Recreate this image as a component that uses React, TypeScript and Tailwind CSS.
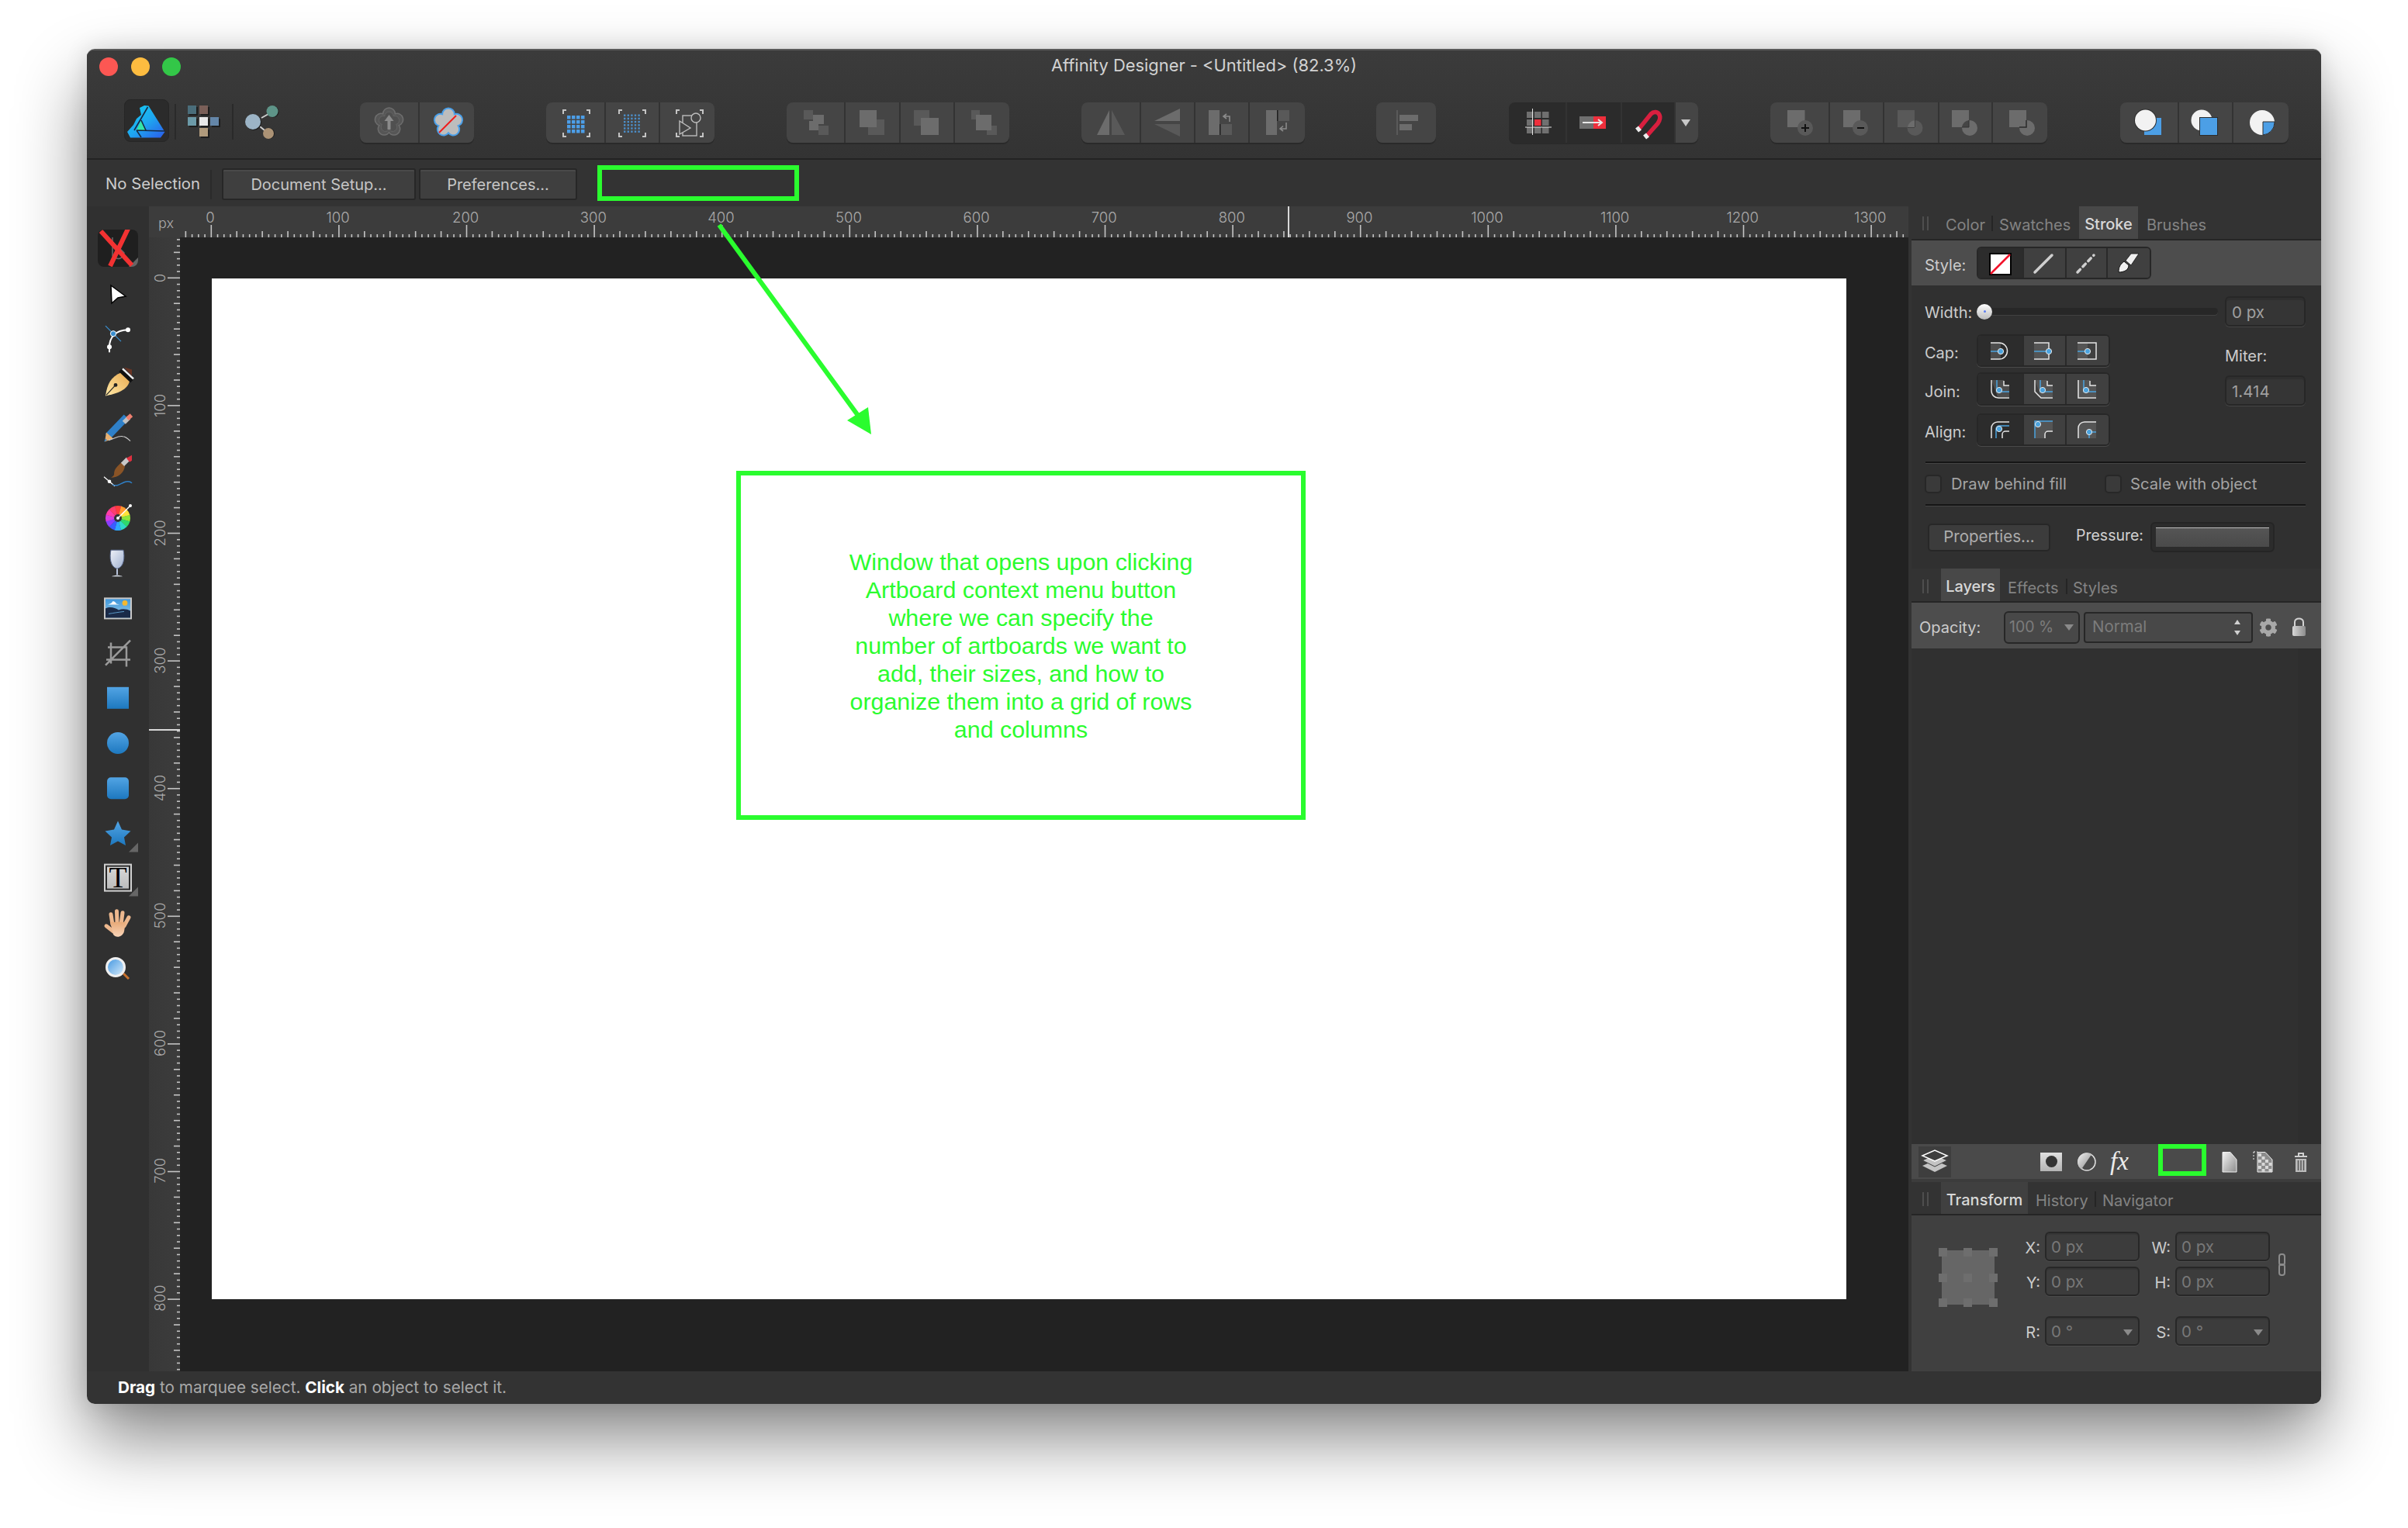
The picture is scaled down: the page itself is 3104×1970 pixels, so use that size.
import React from 'react';
import { FaCog } from 'react-icons/fa';

const GREEN = '#2afc2e';

// svg whose viewBox is in screenshot pixels, so shapes can be placed by page coordinates
const Pic: React.FC<{ x: number; y: number; w: number; h: number; className?: string; children?: React.ReactNode }> = ({ x, y, w, h, className, children }) => (
  <svg width={w} height={h} viewBox={`${x} ${y} ${w} ${h}`} className={`block shrink-0 ${className ?? ''}`} fill="none">
    {children}
  </svg>
);

const flower = (cx: number, cy: number, R: number) => {
  const rad = (d: number) => (d * Math.PI) / 180;
  const vr = R * 0.74;
  const r = R * 0.42;
  const pts = [0, 1, 2, 3, 4, 5].map((i) => {
    const a = rad(-90 - 36 + 72 * i);
    return [cx + vr * Math.cos(a), cy + vr * Math.sin(a)];
  });
  let d = `M${pts[0][0]} ${pts[0][1]}`;
  for (let i = 1; i < 6; i++) d += ` A${r} ${r} 0 1 1 ${pts[i][0]} ${pts[i][1]}`;
  return d + 'Z';
};

const ToolGroup: React.FC<{ className?: string; children: React.ReactNode }> = ({ className, children }) => (
  <div className={`mt-1 flex h-[52px] overflow-hidden rounded-lg shadow-[0_2px_0_#2a2a2a] [&>*+*]:shadow-[inset_2px_0_0_#333] ${className ?? 'bg-[#454545]'}`}>
    {children}
  </div>
);

const Cell: React.FC<{ x: number; w: number; className?: string; children?: React.ReactNode }> = ({ x, w, className, children }) => (
  <div className={className} style={{ width: w }}>
    <Pic x={x} y={132} w={w} h={52}>{children}</Pic>
  </div>
);

const C1 = '#6c6c6c';
const C2 = '#595959';

const Brackets = ({ x }: { x: number }) => (
  <g stroke="#c4c4c4" strokeWidth="2">
    <path d={`M${x} 147V142H${x + 4}M${x + 30} 142H${x + 34}V147M${x} 171V176H${x + 4}M${x + 30} 176H${x + 34}V171`} />
  </g>
);

const Toolbar = () => (
  <div className="flex h-[97px] items-start border-b-2 border-[#232323] pl-[48px] pt-[19px]">
    <div className="h-[55px] w-[58px] rounded-lg border border-[#262626] bg-[#2b2b2b]">
      <Pic x={161} y={129} w={56} h={53}>
        <defs>
          <linearGradient id="aff" x1="0" y1="0" x2="0.9" y2="1">
            <stop offset="0" stopColor="#14d0f2" />
            <stop offset="0.55" stopColor="#1ea6f0" />
            <stop offset="1" stopColor="#2a62ea" />
          </linearGradient>
        </defs>
        <path d="M191.5 136.5L212.5 170L207 177.5L168 177.5L164 170L172 161L176 153L182 148L180 139L186 136Z" fill="url(#aff)" />
        <path d="M176 168L182 155L188 168Z" fill="#34e6a8" />
        <path d="M190.5 138L173 168M182 155L188 168M176 168L213 169M176 168L182 177" stroke="#182a42" strokeWidth="1.6" />
      </Pic>
    </div>
    <div className="ml-[7px] mt-[6px] h-[46px] w-[2px] bg-[#2a2a2a]" />
    <Pic x={227} y={132} w={72} h={52} className="mt-1">
      {[[242, 136, '#4a6d7a'], [257, 136, '#7a5f58'], [242, 151, '#6c9aa8'], [257, 151, '#e8e8e8'], [271, 151, '#6486a8'], [257, 165, '#b09a7c']].map(([x, y, c]) => (
        <g key={`${x}-${y}`}>
          <rect x={(x as number) + 2} y={(y as number) + 2} width="11" height="11" fill="#1d1d1d" />
          <rect x={x as number} y={y as number} width="11" height="11" fill={c as string} />
        </g>
      ))}
    </Pic>
    <div className="mt-[6px] h-[46px] w-[2px] bg-[#2a2a2a]" />
    <Pic x={301} y={132} w={62} h={52} className="mt-1">
      <path d="M337 152L346 147M335 163L341 168" stroke="#d0d0d0" strokeWidth="2" />
      <circle cx="327" cy="158" r="10" fill="#1d1d1d" />
      <circle cx="326" cy="157" r="10" fill="#9cb4c6" />
      <circle cx="352" cy="144" r="7.5" fill="#1d1d1d" />
      <circle cx="351" cy="143.5" r="7.5" fill="#5e9488" />
      <circle cx="347" cy="172" r="7" fill="#1d1d1d" />
      <circle cx="346" cy="172" r="7" fill="#ab9275" />
    </Pic>

    <div className="ml-[101px]">
      <ToolGroup>
        <Cell x={464} w={75}>
          <path d={flower(501.5, 157.5, 18)} fill="#565656" stroke="#6e6e6e" strokeWidth="1.5" />
          <path d={flower(501.5, 157.5, 13)} fill="#505050" stroke="#656565" />
          <path d="M501.5 148L507.5 156H503.5V167H499.5V156H495.5Z" fill="#8a8a8a" />
        </Cell>
        <Cell x={539} w={72}>
          <path d={flower(578, 158, 18)} fill="#bdbdbd" stroke="#4aa0ea" strokeWidth="2" />
          <path d="M566 171L588 149" stroke="#f01c1c" strokeWidth="2" />
        </Cell>
      </ToolGroup>
    </div>

    <div className="ml-[93px]">
      <ToolGroup>
        <Cell x={704} w={75}>
          <Brackets x={726} />
          {[0, 1, 2, 3].map((r) => [0, 1, 2, 3].map((c) => <rect key={`${r}${c}`} x={731 + c * 6} y={149 + r * 6} width="4.5" height="4.5" fill="#4c9ee8" />))}
        </Cell>
        <Cell x={779} w={70}>
          <Brackets x={798} />
          {[0, 1, 2, 3, 4, 5].map((r) => [0, 1, 2, 3, 4].map((c) => <rect key={`${r}${c}`} x={804 + c * 4.6} y={147.5 + r * 4.2} width="2.4" height="2.4" fill="#4c8ec8" />))}
        </Cell>
        <Cell x={849} w={72}>
          <Brackets x={872} />
          <g stroke="#bdbdbd" strokeWidth="1.4">
            <rect x="880" y="149" width="18" height="26" />
            <circle cx="897" cy="152" r="6" fill="#454545" />
            <path d="M876 156L890 165L876 173Z" fill="#454545" />
          </g>
        </Cell>
      </ToolGroup>
    </div>

    <div className="ml-[93px]">
      <ToolGroup>
        <Cell x={1014} w={74}>
          <rect x="1036" y="142" width="12" height="12" fill={C2} />
          <rect x="1048" y="148" width="14" height="12" fill={C1} />
          <rect x="1043" y="156" width="12" height="12" fill={C1} />
          <rect x="1055" y="162" width="13" height="12" fill={C2} />
        </Cell>
        <Cell x={1088} w={71}>
          <path d="M1130 154H1140V174H1119V164H1130Z" fill={C2} />
          <rect x="1108" y="142" width="22" height="22" fill={C1} />
        </Cell>
        <Cell x={1159} w={70}>
          <rect x="1178" y="142" width="20" height="20" fill={C2} />
          <rect x="1187" y="152" width="23" height="22" fill={C1} />
        </Cell>
        <Cell x={1229} w={72}>
          <rect x="1252" y="142" width="11" height="6" fill={C2} />
          <rect x="1252" y="142" width="6" height="12" fill={C2} />
          <path d="M1278 162H1285V174H1272V168H1278Z" fill={C2} />
          <rect x="1258" y="148" width="20" height="20" fill={C1} />
        </Cell>
      </ToolGroup>
    </div>

    <div className="ml-[93px]">
      <ToolGroup>
        <Cell x={1394} w={75}>
          <path d="M1430 142V174H1414Z" fill={C1} />
          <path d="M1433 142V174H1450Z" fill={C2} />
        </Cell>
        <Cell x={1469} w={70}>
          <path d="M1521 140V156H1488Z" fill={C1} />
          <path d="M1521 176V160H1488Z" fill={C2} />
        </Cell>
        <Cell x={1539} w={70}>
          <rect x="1558" y="142" width="14" height="32" fill={C1} />
          <rect x="1573" y="160" width="15" height="14" fill={C2} />
          <rect x="1572" y="160" width="1.5" height="14" fill="#1f1f1f" />
          <path d="M1585 157V150H1578M1581 147L1577 150L1581 153" stroke="#8a8a8a" strokeWidth="1.6" />
        </Cell>
        <Cell x={1609} w={73}>
          <rect x="1632" y="142" width="14" height="32" fill={C1} />
          <rect x="1647" y="142" width="15" height="14" fill={C2} />
          <rect x="1646" y="142" width="1.5" height="14" fill="#1f1f1f" />
          <path d="M1658 158V166H1650M1654 162.5L1650 166L1654 169" stroke="#8a8a8a" strokeWidth="1.6" />
        </Cell>
      </ToolGroup>
    </div>

    <div className="ml-[92px]">
      <ToolGroup>
        <Cell x={1774} w={77}>
          <rect x="1800" y="142" width="2" height="32" fill={C2} />
          <rect x="1804" y="148" width="24" height="8" fill={C1} />
          <rect x="1804" y="160" width="16" height="8" fill={C1} />
        </Cell>
      </ToolGroup>
    </div>

    <div className="ml-[94px]">
      <ToolGroup className="bg-[#2b2b2b]">
        <Cell x={1945} w={73}>
          {[0, 1, 2].map((r) => [0, 1, 2].map((c) => (
            <rect key={`${r}${c}`} x={1968 + c * 10} y={144 + r * 10} width="8.5" height="8" fill={r === 1 && c === 1 ? '#ee2f3c' : '#707070'} />
          )))}
          <path d="M1975.5 140V174M1966 164H2000" stroke="#e4e4e4" strokeWidth="1" />
        </Cell>
        <Cell x={2018} w={71}>
          <rect x="2036" y="150" width="18" height="16" fill="#707070" />
          <rect x="2054" y="150" width="16" height="16" fill="#ee2f3c" />
          <path d="M2040 158H2064M2060 154L2065 158L2060 162" stroke="#e8e8e8" strokeWidth="2" />
        </Cell>
        <Cell x={2089} w={69}>
          <path d="M2112 167L2128 147C2132 143 2137 144 2139 148C2141 152 2139 156 2137 159L2122 176" stroke="#d81f3f" strokeWidth="5.5" />
          <path d="M2110 164L2114 169M2120 173L2124 178" stroke="#ececec" strokeWidth="5" />
        </Cell>
        <div className="flex w-[31px] items-start justify-center bg-[#454545]">
          <Pic x={2168} y={150} w={13} h={12} className="mt-5">
            <path d="M2168 152H2180L2174 161Z" fill="#c8c8c8" />
          </Pic>
        </div>
      </ToolGroup>
    </div>

    <div className="ml-[93px]">
      <ToolGroup>
        <Cell x={2282} w={75}>
          <rect x="2304" y="142" width="22.5" height="22" fill={C1} />
          <circle cx="2327" cy="165" r="10" fill={C2} />
          <path d="M2327 160V170M2322 165H2332" stroke="#111" strokeWidth="2" />
        </Cell>
        <Cell x={2357} w={70}>
          <rect x="2376" y="142" width="22" height="22" fill={C1} />
          <circle cx="2398" cy="165" r="10" fill={C2} />
          <path d="M2394 165H2403" stroke="#111" strokeWidth="2" />
        </Cell>
        <Cell x={2427} w={71}>
          <rect x="2446" y="142" width="22" height="22" fill={C2} />
          <circle cx="2468.5" cy="165" r="10" fill={C2} />
          <path d="M2468 155V164H2459" stroke="#2a2a2a" strokeWidth="1" />
          <path d="M2468 155A10 10 0 0 0 2459 164H2468Z" fill={C1} />
        </Cell>
        <Cell x={2498} w={69}>
          <rect x="2516" y="142" width="22" height="22" fill={C1} />
          <circle cx="2539" cy="165" r="10" fill={C1} />
          <path d="M2538 155A10 10 0 0 0 2529 164H2538Z" fill="#454545" />
          <path d="M2538 155V164H2529" stroke="#333" strokeWidth="1" />
        </Cell>
        <Cell x={2567} w={72}>
          <rect x="2590" y="142" width="22" height="22" fill={C1} />
          <circle cx="2613" cy="165" r="10" fill={C1} />
          <path d="M2612 155V164H2603" stroke="#2a2a2a" strokeWidth="1.5" />
        </Cell>
      </ToolGroup>
    </div>

    <div className="ml-[94px]">
      <ToolGroup>
        <Cell x={2733} w={74}>
          <rect x="2764" y="152" width="22" height="22" fill="#4c9fe6" />
          <circle cx="2765.5" cy="155" r="14.5" fill="#2c2c2c" />
          <circle cx="2765.5" cy="155" r="13.5" fill="#f2f2f2" />
        </Cell>
        <Cell x={2807} w={70}>
          <circle cx="2838" cy="155" r="13.5" fill="#f2f2f2" />
          <rect x="2835" y="151" width="24" height="24" fill="#2c2c2c" />
          <rect x="2836" y="152" width="22" height="22" fill="#4c9fe6" />
        </Cell>
        <Cell x={2877} w={73}>
          <circle cx="2916" cy="158" r="16" fill="#f2f2f2" />
          <path d="M2917 157H2932V158A16 16 0 0 1 2917 174Z" fill="#4c9fe6" stroke="#2c2c2c" strokeWidth="1" />
        </Cell>
      </ToolGroup>
    </div>
  </div>
);

const CtxButton: React.FC<{ className: string; children: React.ReactNode }> = ({ className, children }) => (
  <div className={`flex h-[41px] items-center justify-center rounded-[3px] border-2 border-[#272727] bg-[#3f3f3f] text-[20px] text-[#c6c6c6] shadow-[inset_0_2px_0_#4a4a4a] ${className}`}>
    {children}
  </div>
);

const ContextBar = () => (
  <div className="flex h-[60px] items-center pl-[24px] pt-[3px]">
    <span className="w-[135px] whitespace-nowrap text-[20.300px] text-[#cdcdcd]">No Selection</span>
    <div className="h-[38px] w-[2px] bg-[#2a2a2a]" />
    <CtxButton className="ml-[13px] w-[250px]">Document Setup...</CtxButton>
    <CtxButton className="ml-[4px] w-[204px]">Preferences...</CtxButton>
  </div>
);

const makeTicks = (zero: number, from: number, to: number) => {
  const ticks: { pos: number; size: number }[] = [];
  for (let k = Math.ceil((from - zero) / 8.23); zero + k * 8.23 < to; k++) {
    const size = k % 20 === 0 ? 16 : k % 4 === 0 ? 8 : 4;
    ticks.push({ pos: zero + k * 8.23, size });
  }
  return ticks;
};

const TopRuler = () => (
  <Pic x={232} y={266} w={2228} h={40}>
    {makeTicks(272.5, 236, 2460).map((t) => (
      <rect key={t.pos} x={t.pos - 1} y={306 - t.size} width="1.6" height={t.size} fill="#c4c4c4" />
    ))}
    {Array.from({ length: 14 }).map((_, i) => (
      <text key={i} x={271 + i * 164.6} y={286.5} textAnchor="middle" fontSize="18.5" fontWeight="300" fill="#aaaaaa">{i * 100}</text>
    ))}
    <rect x="1660" y="266" width="2" height="40" fill="#d8d8d8" />
  </Pic>
);

const LeftRuler = () => (
  <Pic x={192} y={306} w={40} h={1462}>
    {makeTicks(358.5, 308, 1768).map((t) => (
      <rect key={t.pos} x={232 - t.size} y={t.pos - 1} width={t.size} height="1.6" fill="#c4c4c4" />
    ))}
    {Array.from({ length: 9 }).map((_, i) => (
      <text key={i} transform={`translate(212.5 ${358.5 + i * 164.4}) rotate(-90)`} textAnchor="middle" fontSize="18.5" fontWeight="300" fill="#aaaaaa">{i * 100}</text>
    ))}
    <rect x="192" y="940" width="40" height="2" fill="#d8d8d8" />
  </Pic>
);

const Blue = ({ id }: { id: string }) => (
  <defs>
    <linearGradient id={id} x1="0" y1="0" x2="0" y2="1">
      <stop offset="0" stopColor="#52a4e4" />
      <stop offset="1" stopColor="#1d78bf" />
    </linearGradient>
  </defs>
);

const wheelColors = ['#ff3d3d', '#ff9a2e', '#ffe23a', '#8fe63a', '#2fd96a', '#2fd9c4', '#2fa8ff', '#3a5cff', '#8a3dff', '#d63de0', '#ff3da8', '#ff3d6d'];

const toolDrawings: React.ReactNode[] = [
  <path key="arrow" d="M143 368L162 382L152 384L144 391Z" fill="#fff" stroke="#000" strokeWidth="1.5" />,
  <g key="node">
    <path d="M136 420L156 440" stroke="#3a8fd0" strokeWidth="1.2" />
    <path d="M141 454V447C141 436 148 425 165 425" stroke="#fff" strokeWidth="2" />
    <circle cx="141" cy="447" r="3" fill="#fff" />
    <circle cx="165" cy="425" r="3" fill="#fff" />
    <circle cx="146" cy="430" r="3.6" fill="#3a8fd0" stroke="#fff" />
  </g>,
  <g key="pen">
    <defs>
      <linearGradient id="gold" x1="0" y1="1" x2="1" y2="0">
        <stop offset="0" stopColor="#ffe9a8" />
        <stop offset="1" stopColor="#e8a94e" />
      </linearGradient>
    </defs>
    <path d="M136 510C138 495 143 485 156 480L167 491C164 503 150 507 136 510Z" fill="url(#gold)" />
    <path d="M137 509L149 496" stroke="#222" strokeWidth="1.2" />
    <circle cx="149" cy="496" r="2.4" fill="#222" />
    <path d="M155 477L170 491" stroke="#111" strokeWidth="5" />
    <path d="M158 475L172 488" stroke="#eee" strokeWidth="2.5" />
    <path d="M160 473L170 476L170 484Z" fill="#6a3424" />
  </g>,
  <g key="pencil">
    <path d="M139 563L163 538" stroke="#2f80c8" strokeWidth="9" />
    <path d="M135 570L137 558L146 566Z" fill="#e8b070" />
    <path d="M134 570L136 566L138 568Z" fill="#2f80c8" />
    <path d="M161 540L165 544" stroke="#c0c0c0" strokeWidth="9" />
    <path d="M165 536L168.500 540" stroke="#f08070" strokeWidth="7" />
    <path d="M140 568C148 566 152 562 158 563C162 563 165 566 168 569" stroke="#ccc" strokeWidth="1.2" />
  </g>,
  <g key="brush">
    <path d="M147 612C147 604 152 601 157 596L161 601C160 610 152 616 143 616C146 614 147 613 147 612Z" fill="#8a5426" />
    <path d="M158 599L165 592" stroke="#c8c8c8" strokeWidth="6" />
    <path d="M163 591L170 587V594L167 596Z" fill="#e03040" />
    <path d="M134 615L148 627" stroke="#fff" strokeWidth="1.2" />
    <circle cx="141" cy="621" r="2.3" fill="#fff" />
    <path d="M145 625C151 628 155 624 160 622C165 620 168 621 170 623" stroke="#2f80c8" strokeWidth="1.5" />
  </g>,
  <g key="wheel">
    {wheelColors.map((c, i) => {
      const a = ((i * 30 - 105) * Math.PI) / 180;
      const b = (((i + 1) * 30 - 105 + 1) * Math.PI) / 180;
      return <path key={c} d={`M152 668L${152 + 16 * Math.cos(a)} ${668 + 16 * Math.sin(a)}A16 16 0 0 1 ${152 + 16 * Math.cos(b)} ${668 + 16 * Math.sin(b)}Z`} fill={c} />;
    })}
    <circle cx="152" cy="668" r="5" fill="#333" />
    <path d="M152 668L168 652" stroke="#fff" strokeWidth="1.5" />
    <circle cx="152" cy="668" r="2" fill="#fff" />
    <circle cx="168" cy="652" r="2" fill="#fff" />
  </g>,
  <g key="wine">
    <defs>
      <linearGradient id="glass" x1="0" y1="0" x2="1" y2="1">
        <stop offset="0" stopColor="#eef1f8" />
        <stop offset="1" stopColor="#9fb0d0" />
      </linearGradient>
    </defs>
    <path d="M143 709H159C161 718 160 731 151 733C142 731 141 718 143 709Z" fill="url(#glass)" stroke="#5a6a90" />
    <path d="M151 733V741" stroke="#b8c4dc" strokeWidth="2" />
    <path d="M144 743C147 741 155 741 158 743Z" fill="#dfe5f0" />
  </g>,
  <g key="image">
    <defs>
      <linearGradient id="sky" x1="0" y1="0" x2="0" y2="1">
        <stop offset="0" stopColor="#3a94dc" />
        <stop offset="1" stopColor="#9fd0e6" />
      </linearGradient>
    </defs>
    <rect x="135" y="771" width="34" height="26" fill="url(#sky)" stroke="#c8c8c8" strokeWidth="2" />
    <path d="M136 784C142 781 148 783 153 786C158 784 164 785 168 787V796H136Z" fill="#1a2a48" />
    <path d="M140 791C146 790 152 789 160 788" stroke="#5a9ac8" strokeWidth="1" />
    <circle cx="161" cy="777" r="3.400" fill="#f5b82e" />
    <path d="M139 779C141 778 144 778 145 775C147 774 149 776 150 778L154 779Z" fill="#fff" />
  </g>,
  <path key="crop" d="M143 829V856M137 851H168M139 835H163V860M136 858L168 826" stroke="#9a9a9a" strokeWidth="2.500" />,
  <g key="rect"><Blue id="b1" /><rect x="138" y="886" width="28" height="28" fill="url(#b1)" /></g>,
  <g key="ell"><Blue id="b2" /><circle cx="152" cy="958" r="14" fill="url(#b2)" /></g>,
  <g key="round"><Blue id="b3" /><rect x="138" y="1002" width="28" height="28" rx="5" fill="url(#b3)" /></g>,
  <g key="star">
    <Blue id="b4" />
    <path d="M152 1058L157 1069L168.500 1071L160 1079L162 1089.500L152 1084L142 1089.500L144 1079L135.500 1071L147 1069Z" fill="url(#b4)" />
    <path d="M178 1086V1098H166Z" fill="#666" />
  </g>,
  <g key="text">
    <defs>
      <linearGradient id="tbg" x1="0" y1="0" x2="0" y2="1">
        <stop offset="0" stopColor="#d8d8d8" />
        <stop offset="1" stopColor="#bcbcbc" />
      </linearGradient>
    </defs>
    <rect x="135" y="1115" width="34" height="34" fill="#2b2b2b" stroke="#d0d0d0" strokeWidth="2" />
    <rect x="138" y="1118" width="28" height="28" fill="url(#tbg)" />
    <text x="152" y="1144.500" textAnchor="middle" fontSize="38" fontFamily="'Liberation Serif', serif" fill="#000">T</text>
    <path d="M178 1144V1156H166Z" fill="#666" />
  </g>,
  <g key="hand">
    <defs>
      <linearGradient id="skin" x1="0" y1="0" x2="0" y2="1">
        <stop offset="0" stopColor="#e8aa78" />
        <stop offset="1" stopColor="#f8d4b8" />
      </linearGradient>
    </defs>
    <g stroke="#edb88e" strokeLinecap="round" strokeWidth="5">
      <path d="M145 1192L143 1179" />
      <path d="M151 1190L150.500 1175" />
      <path d="M156 1192L158 1177" />
      <path d="M160 1194L166 1183" />
      <path d="M146 1201L137 1194" />
    </g>
    <path d="M142 1189H162L160 1201C158 1209 149 1210 146 1205Z" fill="url(#skin)" />
  </g>,
  <g key="zoom">
    <defs>
      <linearGradient id="lens" x1="0" y1="0" x2="1" y2="1">
        <stop offset="0" stopColor="#3f94e0" />
        <stop offset="1" stopColor="#dcEffc" />
      </linearGradient>
    </defs>
    <path d="M159 1255L166 1262" stroke="#c8722e" strokeWidth="3" />
    <circle cx="149" cy="1247" r="11.500" fill="url(#lens)" stroke="#f0f0f0" strokeWidth="3" />
  </g>,
];

const ToolColumn = () => (
  <div className="flex w-[80px] shrink-0 flex-col bg-[#303030] pt-[30px]">
    <div className="relative ml-[14px] h-[48px] w-[52px] overflow-hidden rounded-lg bg-[#1f1f1f]">
      <Pic x={126} y={296} w={52} h={48}>
        <path d="M145 306V330C152 336 158 334 160 326L152 318" stroke="#6a6a6a" strokeWidth="1.500" />
        <path d="M178 332V344H166Z" fill="#666" />
        <path d="M130 298L170 342M165 295L142 343" stroke="#f23232" strokeWidth="6" />
      </Pic>
    </div>
    <div className="mt-[7px] flex flex-col">
      {toolDrawings.map((d, i) => (
        <div key={i} className="h-[57.8px]">
          <svg width="80" height="57.8" viewBox={`112 ${351 + i * 57.8} 80 57.8`} className="block overflow-visible" fill="none">{d}</svg>
        </div>
      ))}
    </div>
  </div>
);

const Grip = () => (
  <div className="flex h-[18px] w-[8px] justify-between">
    <span className="w-[2px] bg-[#4e4e4e]" />
    <span className="w-[2px] bg-[#4e4e4e]" />
  </div>
);

const TabSep = ({ className }: { className: string }) => <span className={`h-[20px] w-[2px] bg-[#252525] ${className}`} />;

const Tab: React.FC<{ className: string; children: React.ReactNode }> = ({ className, children }) => (
  <span className={`whitespace-nowrap pt-[4px] text-[20px] leading-none text-[#838383] ${className}`}>{children}</span>
);

const ActiveTab: React.FC<{ className: string; children: React.ReactNode }> = ({ className, children }) => (
  <div className={`flex h-full items-center justify-center self-end bg-[#484848] pt-[4px] text-[20px] font-medium text-[#d8d8d8] ${className}`}>{children}</div>
);

const Segments: React.FC<{ className?: string; children: React.ReactNode }> = ({ className, children }) => (
  <div className={`flex overflow-hidden rounded-[6px] border-2 border-[#272727] bg-[#404040] shadow-[0_1px_0_#4a4a4a] [&>*+*]:shadow-[inset_2px_0_0_#2a2a2a] ${className ?? 'h-[42px]'}`}>
    {children}
  </div>
);

const Seg: React.FC<{ x: number; w: number; y: number; h?: number; dark?: boolean; children?: React.ReactNode }> = ({ x, w, y, h = 38, dark, children }) => (
  <div className={dark ? 'bg-[#2c2c2c]' : 'bg-[#404040]'} style={{ width: w }}>
    <Pic x={x} y={y} w={w} h={h}>{children}</Pic>
  </div>
);

const Dot = ({ cx, cy }: { cx: number; cy: number }) => <circle cx={cx} cy={cy} r="3.600" fill="#4aa3df" stroke="#e8e8e8" />;

const BoxField: React.FC<{ className?: string; children?: React.ReactNode }> = ({ className, children }) => (
  <div className={`flex h-[39px] items-center rounded-[6px] border-2 border-[#272727] bg-[#353535] pl-[7px] pt-[3px] text-[20.500px] text-[#a0a0a0] shadow-[inset_0_3px_0_#2f2f2f,0_1px_0_#454545] ${className ?? ''}`}>
    {children}
  </div>
);

const Tri = () => (
  <svg width="12" height="10" viewBox="0 0 12 10" className="shrink-0"><path d="M0 1H12L6 9Z" fill="#8a8a8a" /></svg>
);

const TField: React.FC<{ label: string; labelW: string; value: string; drop?: boolean }> = ({ label, labelW, value, drop }) => (
  <div className="flex items-center">
    <span className={`mr-[6px] pt-[4px] text-right text-[20px] text-[#cccccc] ${labelW}`}>{label}</span>
    <div className="flex h-[38px] w-[122px] items-center justify-between rounded-[6px] border-2 border-[#272727] bg-[#3c3c3c] pl-[6px] pr-[7px] pt-[3px] text-[20.500px] text-[#787878] shadow-[inset_0_2px_0_#363636,0_1px_0_#4c4c4c]">
      {value}
      {drop && <Tri />}
    </div>
  </div>
);

const StrokePanel = () => (
  <>
    <div className="flex h-[44px] items-end border-b-2 border-[#252525] bg-[#333333] pl-[14px]">
      <div className="flex h-[40px] items-center">
        <Grip />
        <Tab className="ml-[22px] w-[51px]">Color</Tab>
        <TabSep className="ml-[8px]" />
        <Tab className="ml-[8px] w-[92px]">Swatches</Tab>
      </div>
      <ActiveTab className="ml-[11px] w-[76px]">Stroke</ActiveTab>
      <div className="flex h-[40px] items-center">
        <Tab className="ml-[11px]">Brushes</Tab>
      </div>
    </div>
    <div className="flex h-[58px] items-center bg-[#4d4d4d] pl-[17px]">
      <span className="w-[67px] pt-[6px] text-[20px] text-[#cccccc]">Style:</span>
      <Segments>
        <Seg x={2550} w={57} y={320} dark>
          <rect x="2565" y="327" width="27" height="27" fill="#fff" stroke="#000" strokeWidth="2" />
          <path d="M2566 353L2591 328" stroke="#f2122a" strokeWidth="2.500" />
        </Seg>
        <Seg x={2607} w={55} y={320}>
          <path d="M2623 351L2645 329" stroke="#cfcfcf" strokeWidth="3.500" strokeLinecap="round" />
        </Seg>
        <Seg x={2662} w={53} y={320}>
          <path d="M2678 351L2699 329" stroke="#cfcfcf" strokeWidth="3.500" strokeLinecap="round" strokeDasharray="5 5" />
        </Seg>
        <Seg x={2715} w={56} y={320}>
          <path d="M2731 351C2731 344 2733 341 2738 337L2744 342C2744 348 2738 351 2731 351Z" fill="#f0f0f0" stroke="#111" />
          <path d="M2740 336L2747 327H2757L2747 342Z" fill="#f0f0f0" stroke="#111" strokeWidth="0.800" />
        </Seg>
      </Segments>
    </div>

    <div className="h-[365px] bg-[#303030] pt-[14px]">
      <div className="ml-[17px] flex h-[39px] items-center">
        <span className="w-[67px] pt-[3px] text-[20px] text-[#cccccc]">Width:</span>
        <div className="relative h-[9px] w-[311px] rounded-full bg-[#272727] shadow-[0_1px_0_#414141]">
          <div className="absolute left-0 top-1/2 flex h-[20px] w-[20px] -translate-y-1/2 items-center justify-center rounded-full bg-gradient-to-b from-white to-[#bcbcbc]">
            <span className="h-[3px] w-[3px] rounded-full bg-[#5b7cf0]" />
          </div>
        </div>
        <BoxField className="ml-[9px] w-[104px]">0 px</BoxField>
      </div>

      <div className="ml-[17px] mt-[10px] flex">
        <div className="flex w-[387px] flex-col">
          <div className="flex h-[42px] items-center">
            <span className="w-[67px] pt-[6px] text-[20px] text-[#cccccc]">Cap:</span>
            <Segments>
              <Seg x={2550} w={57} y={433} dark>
                <rect x="2566" y="442" width="13" height="21" fill="#4d4d4d" />
                <path d="M2566 442H2577A10.500 10.500 0 0 1 2577 463H2566" stroke="#e4e4e4" strokeWidth="1.500" />
                <path d="M2566 453H2579" stroke="#4aa3df" strokeWidth="1.500" />
                <Dot cx={2579} cy={453} />
              </Seg>
              <Seg x={2607} w={55} y={433}>
                <rect x="2622" y="442" width="19" height="21" fill="#555" />
                <path d="M2622 442H2641V463H2622" stroke="#e4e4e4" strokeWidth="1.500" />
                <path d="M2622 453H2641" stroke="#4aa3df" strokeWidth="1.500" />
                <Dot cx={2641} cy={453} />
              </Seg>
              <Seg x={2662} w={56} y={433}>
                <rect x="2678" y="442" width="13" height="21" fill="#555" />
                <path d="M2678 442H2702V463H2678" stroke="#e4e4e4" strokeWidth="1.500" />
                <path d="M2678 453H2691" stroke="#4aa3df" strokeWidth="1.500" />
                <Dot cx={2691} cy={453} />
              </Seg>
            </Segments>
          </div>
          <div className="mt-[7px] flex h-[43px] items-center">
            <span className="w-[67px] pt-[6px] text-[20px] text-[#cccccc]">Join:</span>
            <Segments className="h-[43px]">
              <Seg x={2550} w={57} y={482} h={39} dark>
                <path d="M2567 490H2583V497H2590V512H2575Z" fill="#4d4d4d" />
                <path d="M2567 490V504A9 9 0 0 0 2576 513H2590M2583 491V497H2590" stroke="#e4e4e4" strokeWidth="1.500" />
                <path d="M2574 490V505H2590" stroke="#4aa3df" strokeWidth="1.500" />
                <Dot cx={2577} cy={503} />
              </Seg>
              <Seg x={2607} w={55} y={482} h={39}>
                <path d="M2623 490H2639V497H2646V512H2631Z" fill="#555" />
                <path d="M2623 490V505L2631 513H2646M2639 491V497H2646" stroke="#e4e4e4" strokeWidth="1.500" />
                <path d="M2630 490V505H2646" stroke="#4aa3df" strokeWidth="1.500" />
                <Dot cx={2633} cy={503} />
              </Seg>
              <Seg x={2662} w={56} y={482} h={39}>
                <path d="M2678 490H2694V497H2702V512H2678Z" fill="#555" />
                <path d="M2679 490V513H2702M2694 491V497H2702" stroke="#e4e4e4" strokeWidth="1.500" />
                <path d="M2686 490V505H2702" stroke="#4aa3df" strokeWidth="1.500" />
                <Dot cx={2689} cy={503} />
              </Seg>
            </Segments>
          </div>
          <div className="mt-[10px] flex h-[42px] items-center">
            <span className="w-[67px] pt-[6px] text-[20px] text-[#cccccc]">Align:</span>
            <Segments>
              <Seg x={2550} w={57} y={535} dark>
                <path d="M2567 565V552A8 8 0 0 1 2575 544H2590M2581 565V560A4 4 0 0 1 2585 556H2590" stroke="#e4e4e4" strokeWidth="1.500" />
                <path d="M2573 565V553A4 4 0 0 1 2577 549H2590" stroke="#4aa3df" strokeWidth="1.500" />
                <Dot cx={2577} cy={553} />
              </Seg>
              <Seg x={2607} w={55} y={535}>
                <path d="M2623 565V543H2646V556H2640A4 4 0 0 0 2636 560V565Z" fill="#555" />
                <path d="M2636 565V560A4 4 0 0 1 2640 556H2646" stroke="#e4e4e4" strokeWidth="1.500" />
                <path d="M2623 565V543H2646" stroke="#4aa3df" strokeWidth="1.500" />
                <Dot cx={2627} cy={547} />
              </Seg>
              <Seg x={2662} w={56} y={535}>
                <path d="M2679 565V552A8 8 0 0 1 2687 544H2702V565Z" fill="#555" />
                <path d="M2679 565V552A8 8 0 0 1 2687 544H2702" stroke="#e4e4e4" strokeWidth="1.500" />
                <path d="M2693 565V557H2702" stroke="#4aa3df" strokeWidth="1.500" />
                <Dot cx={2693} cy={557} />
              </Seg>
            </Segments>
          </div>
        </div>
        <div className="flex w-[104px] flex-col">
          <span className="mt-[16px] h-[37px] text-[20px] leading-[24px] text-[#cccccc]">Miter:</span>
          <BoxField>1.414</BoxField>
        </div>
      </div>

      <div className="ml-[18px] mr-[20px] mt-[20px] h-[3px] border-b border-t-2 border-b-[#454545] border-t-[#151515]" />
      <div className="ml-[17px] mt-[14px] flex h-[24px] items-center text-[20.200px] text-[#a4a4a4]">
        <span className="h-[24px] w-[22px] rounded-[5px] border-2 border-[#272727] bg-[#3a3a3a]" />
        <span className="ml-[12px] w-[198px] whitespace-nowrap">Draw behind fill</span>
        <span className="h-[24px] w-[22px] rounded-[5px] border-2 border-[#272727] bg-[#3a3a3a]" />
        <span className="ml-[11px] whitespace-nowrap">Scale with object</span>
      </div>
      <div className="ml-[18px] mr-[20px] mt-[14px] h-[3px] border-b border-t-2 border-b-[#454545] border-t-[#151515]" />
      <div className="ml-[21px] mt-[20px] flex h-[39px] items-center">
        <div className="flex h-[36px] w-[158px] items-center justify-center rounded-[5px] border-2 border-[#272727] bg-[#3c3c3c] text-[20.500px] text-[#adadad]">Properties...</div>
        <span className="ml-[33px] w-[96px] pb-[4px] text-[19.500px] text-[#d0d0d0]">Pressure:</span>
        <div className="flex h-[39px] w-[160px] items-center justify-center rounded-[6px] border-2 border-[#252525] bg-[#2c2c2c]">
          <div className="h-[25px] w-[146px] border-t border-[#bcbcbc] bg-gradient-to-b from-[#555] to-[#4a4a4a]" />
        </div>
      </div>
    </div>
  </>
);

const LayersPanel = () => (
  <>
    <div className="flex h-[44px] items-end border-b-2 border-[#252525] bg-[#333333] pl-[14px]">
      <div className="flex h-[39px] w-[24px] items-center"><Grip /></div>
      <ActiveTab className="h-[39px] w-[76px]">Layers</ActiveTab>
      <div className="flex h-[39px] items-center">
        <Tab className="ml-[10px] w-[67px]">Effects</Tab>
        <TabSep className="ml-[8px]" />
        <Tab className="ml-[7px]">Styles</Tab>
      </div>
    </div>
    <div className="flex h-[59px] items-center bg-[#4d4d4d] pl-[10px] pt-[4px]">
      <span className="w-[109px] text-[20px] text-[#cccccc]">Opacity:</span>
      <div className="flex h-[42px] w-[98px] items-center justify-between rounded-[6px] border-2 border-[#272727] bg-[#484848] pl-[5px] pr-[6px] text-[19.500px] text-[#7c7c7c]">
        100 %
        <Tri />
      </div>
      <div className="ml-[5px] flex h-[40px] w-[218px] items-center justify-between rounded-[4px] border-2 border-[#272727] bg-[#484848] pl-[9px] pr-[13px] text-[20.500px] text-[#7c7c7c]">
        Normal
        <svg width="10" height="20" viewBox="0 0 10 20"><path d="M5 0L9 6H1ZM5 20L9 14H1Z" fill="#d0d0d0" /></svg>
      </div>
      <FaCog className="ml-[8px] text-[24px] text-[#a8a8a8]" />
      <Pic x={2954} y={796} w={20} h={25} className="ml-[18px]">
        <defs>
          <linearGradient id="lock" x1="0" y1="0" x2="1" y2="0">
            <stop offset="0" stopColor="#d8d8d8" />
            <stop offset="1" stopColor="#8c8c8c" />
          </linearGradient>
        </defs>
        <path d="M2958 808V802C2958 796 2969 796 2969 802V808" stroke="#d4d4d4" strokeWidth="2" />
        <rect x="2955" y="807" width="17" height="13" rx="2" fill="url(#lock)" />
      </Pic>
    </div>
    <div className="flex h-[639px] justify-end bg-[#303030]">
      <div className="w-[30px] bg-[#2e2e2e]" />
    </div>
    <div className="flex h-[49px] items-center border-b-4 border-[#3c3c3c] bg-[#4a4a4a] pl-[9px] pr-[16px]">
      <div className="flex h-[40px] w-[42px] items-center justify-center bg-[#3e3e3e]">
        <Pic x={2475} y={1480} w={38} h={36}>
          <path d="M2478 1503L2494 1496L2510 1503L2494 1511Z" fill="#c4c4c4" />
          <path d="M2478 1496L2494 1489L2510 1496L2494 1504Z" fill="#c4c4c4" stroke="#3e3e3e" />
          <path d="M2478 1490L2494 1483L2510 1490L2494 1497Z" fill="#3e3e3e" stroke="#fff" strokeWidth="1.500" />
        </Pic>
      </div>
      <div className="ml-[115px] flex h-[24px] w-[28px] items-center justify-center bg-gradient-to-b from-[#e0e0e0] to-[#b4b4b4]">
        <span className="h-[15px] w-[15px] rounded-full bg-[#333333]" />
      </div>
      <Pic x={2678} y={1486} w={24} h={24} className="ml-[20px]">
        <defs>
          <linearGradient id="adj" x1="0" y1="0" x2="1" y2="1">
            <stop offset="0" stopColor="#f2f2f2" />
            <stop offset="1" stopColor="#8a8a8a" />
          </linearGradient>
        </defs>
        <circle cx="2690" cy="1498" r="11" fill="#4a4a4a" stroke="#e0e0e0" strokeWidth="1.500" />
        <path d="M2696 1488.500L2683 1507.500A11 11 0 0 1 2696 1488.500Z" fill="url(#adj)" />
      </Pic>
      <span className="ml-[18px] w-[30px] whitespace-nowrap font-['Liberation_Serif',serif] text-[33px] italic leading-none text-[#ececec]">fx</span>
      <Pic x={2864} y={1483} w={20} h={28} className="ml-auto">
        <defs>
          <linearGradient id="doc" x1="0" y1="0" x2="1" y2="1">
            <stop offset="0" stopColor="#f4f4f4" />
            <stop offset="1" stopColor="#8c8c8c" />
          </linearGradient>
        </defs>
        <path d="M2865 1484.500H2875L2883 1494V1510H2865Z" fill="url(#doc)" stroke="#f0f0f0" />
      </Pic>
      <Pic x={2904} y={1483} w={27} h={28} className="ml-[20px]">
        <path d="M2910 1484.500H2920L2929 1494V1510H2910Z" fill="#8c8c8c" stroke="#f0f0f0" />
        {[0, 1, 2, 3, 4, 5].map((r) => [0, 1, 2, 3].map((c) => ((r + c) % 2 === 0 && !(r < 2 && c > 1)) ? <rect key={`${r}${c}`} x={2911 + c * 4.500} y={1486 + r * 4} width="4" height="4" fill="#d8d8d8" /> : null))}
        <path d="M2905 1484H2910M2905 1484V1494" stroke="#f0f0f0" strokeDasharray="2 2" />
      </Pic>
      <Pic x={2955} y={1484} w={20} h={28} className="ml-[25px]">
        <path d="M2957 1491H2973M2962 1490V1487H2968V1490" stroke="#d0d0d0" strokeWidth="2" />
        <path d="M2958 1494H2972V1511H2958Z" fill="#bbbbbb" />
        <path d="M2961.500 1496V1509M2965 1496V1509M2968.500 1496V1509" stroke="#555" strokeWidth="1.500" />
      </Pic>
    </div>
  </>
);

const TransformPanel = () => (
  <>
    <div className="flex h-[43px] items-end border-b-2 border-[#252525] bg-[#333333] pl-[14px]">
      <div className="flex h-[39px] w-[24px] items-center"><Grip /></div>
      <ActiveTab className="h-[39px] w-[112px] !bg-[#404040]">Transform</ActiveTab>
      <div className="flex h-[39px] items-center">
        <Tab className="ml-[10px] w-[68px]">History</Tab>
        <TabSep className="ml-[8px]" />
        <Tab className="ml-[8px]">Navigator</Tab>
      </div>
    </div>
    <div className="flex h-[201px] bg-[#404040]">
      <Pic x={2499} y={1609} w={76} h={76} className="ml-[35px] mt-[42px]">
        <rect x="2503" y="1612" width="68" height="70" fill="#666" />
        {[2499, 2531, 2564].map((x) => [1609, 1642, 1674].map((y) => <rect key={`${x}${y}`} x={x} y={y} width="11" height="11" fill="#6e6e6e" />))}
      </Pic>
      <div className="ml-[25px] mt-[21px] flex flex-col">
        <div className="flex">
          <TField label="X:" labelW="w-[30px]" value="0 px" />
          <TField label="W:" labelW="w-[40px]" value="0 px" />
        </div>
        <div className="mt-[7px] flex">
          <TField label="Y:" labelW="w-[30px]" value="0 px" />
          <TField label="H:" labelW="w-[40px]" value="0 px" />
        </div>
        <div className="mt-[26px] flex">
          <TField label="R:" labelW="w-[30px]" value="0 °" drop />
          <TField label="S:" labelW="w-[40px]" value="0 °" drop />
        </div>
      </div>
      <Pic x={2936} y={1616} w={12} h={30} className="ml-[10px] mt-[49px]">
        <rect x="2938" y="1617" width="7" height="14" rx="3" stroke="#8c8c8c" strokeWidth="2" />
        <rect x="2938" y="1630" width="7" height="14" rx="3" stroke="#8c8c8c" strokeWidth="2" />
      </Pic>
    </div>
  </>
);

const annotationLines = [
  'Window that opens upon clicking',
  'Artboard context menu button',
  'where we can specify the',
  'number of artboards we want to',
  'add, their sizes, and how to',
  'organize them into a grid of rows',
  'and columns',
];

export default function App() {
  return (
    <div className="h-[1970px] w-[3104px] overflow-hidden bg-white pl-[112px] pt-[63px] font-['Inter','Liberation_Sans',sans-serif]">
      <div className="relative h-[1747px] w-[2880px] rounded-[10px] shadow-[0_44px_90px_rgba(0,0,0,0.48),0_0_30px_rgba(0,0,0,0.12)]">
        <div className="flex h-full flex-col overflow-hidden rounded-[10px] border-t-2 border-[#5a5a5a] bg-[#333333]">
          {/* title + main toolbar */}
          <div className="bg-gradient-to-b from-[#3b3b3b] to-[#333333]">
            <div className="relative flex h-[44px] items-center justify-center pb-[6px]">
              <div className="absolute left-[16px] top-[9px] flex gap-[16.500px]">
                <span className="h-[24px] w-[24px] rounded-full bg-[#fc5753]" />
                <span className="h-[24px] w-[24px] rounded-full bg-[#fdbc40]" />
                <span className="h-[24px] w-[24px] rounded-full bg-[#33c748]" />
              </div>
              <span className="whitespace-nowrap text-[21.900px] text-[#d2d2d2]">Affinity Designer - &lt;Untitled&gt; (82.3%)</span>
            </div>
            <Toolbar />
          </div>
          <ContextBar />

          <div className="flex flex-1">
            <ToolColumn />
            <div className="flex w-[2268px] shrink-0 flex-col">
              <div className="flex h-[40px] bg-[#3c3c3c]">
                <div className="w-[40px] pl-[12px] pt-[11px] text-[18px] font-light leading-[22px] text-[#aaaaaa]">px</div>
                <TopRuler />
              </div>
              <div className="flex flex-1">
                <div className="w-[40px] bg-gradient-to-r from-[#383838] to-[#3c3c3c]"><LeftRuler /></div>
                <div className="flex-1 bg-[#222222] pl-[41px] pt-[53px]">
                  <div className="h-[1316px] w-[2107px] bg-white" />
                </div>
              </div>
            </div>
            <div className="w-[4px] bg-[#333333]" />
            <div className="flex w-[528px] flex-col">
              <StrokePanel />
              <LayersPanel />
              <TransformPanel />
            </div>
          </div>

          <div className="flex h-[42px] items-center pl-[40px] text-[20.700px] text-[#a8a8a8]">
            <span className="whitespace-nowrap"><b className="font-bold text-white">Drag</b> to marquee select. <b className="font-bold text-white">Click</b> an object to select it.</span>
          </div>
        </div>

        {/* green annotations over the app */}
        <div className="absolute left-[658px] top-[150px] h-[46px] w-[260px] border-[6px] border-[#2afc2e]" />
        <div className="absolute left-[2670px] top-[1412px] h-[41px] w-[62px] border-[6px] border-[#2afc2e]" />
        <svg width="220" height="290" viewBox="912 283 220 290" className="absolute left-[800px] top-[220px]" fill="none">
          <path d="M927 290L1107 537" stroke={GREEN} strokeWidth="6" />
          <path d="M1119 525L1123 560L1092 542Z" fill={GREEN} />
        </svg>
        <div className="absolute left-[837px] top-[544px] flex h-[450px] w-[734px] flex-col items-center justify-center border-[6px] border-[#2afc2e] bg-white font-['Liberation_Sans',sans-serif] text-[30.400px] leading-[36px] text-[#2afc2e]">
          {annotationLines.map((l) => (
            <span key={l} className="whitespace-nowrap">{l}</span>
          ))}
        </div>
      </div>
    </div>
  );
}
